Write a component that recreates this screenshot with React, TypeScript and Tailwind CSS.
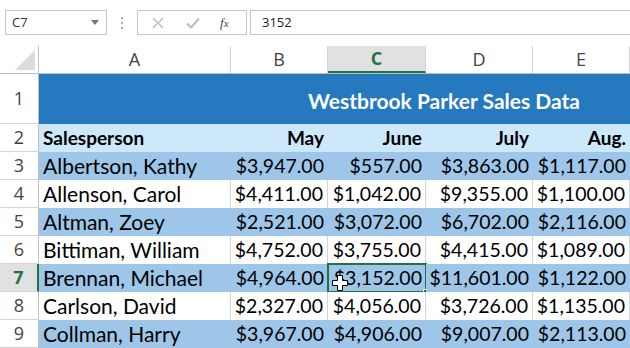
import React from "react";

const cols = [
  { key: "A", w: "w-[192px]" },
  { key: "B", w: "w-[97px]" },
  { key: "C", w: "w-[98px]" },
  { key: "D", w: "w-[107px]" },
  { key: "E", w: "w-[97px]" },
];

const rows: string[][] = [
  ["Albertson, Kathy", "$3,947.00", "$557.00", "$3,863.00", "$1,117.00"],
  ["Allenson, Carol", "$4,411.00", "$1,042.00", "$9,355.00", "$1,100.00"],
  ["Altman, Zoey", "$2,521.00", "$3,072.00", "$6,702.00", "$2,116.00"],
  ["Bittiman, William", "$4,752.00", "$3,755.00", "$4,415.00", "$1,089.00"],
  ["Brennan, Michael", "$4,964.00", "$3,152.00", "$11,601.00", "$1,122.00"],
  ["Carlson, David", "$2,327.00", "$4,056.00", "$3,726.00", "$1,135.00"],
  ["Collman, Harry", "$3,967.00", "$4,906.00", "$9,007.00", "$2,113.00"],
];

const cellFont = { fontFamily: "Lato, 'Open Sans', sans-serif" };

function RowHeader({ n, active }: { n: number; active?: boolean }) {
  return (
    <div
      className={`w-[39px] shrink-0 flex items-center justify-center border-b border-[#d4d4d4] text-[18px] ${
        active
          ? "bg-[#e1e1e1] text-[#217346] font-bold border-r-2 border-r-[#217346]"
          : "bg-white text-[#444] border-r border-r-[#bfbfbf]"
      }`}
      style={{ fontFamily: "'Open Sans', sans-serif" }}
    >
      {n}
    </div>
  );
}

function Cursor() {
  return (
    <svg
      className="absolute left-[4px] top-[11px]"
      width="16"
      height="16"
      viewBox="0 0 16 16"
    >
      <path
        d="M5.5 0.5h5v5h5v5h-5v5h-5v-5h-5v-5h5z"
        fill="#fff"
        stroke="#000"
        strokeWidth="1"
      />
    </svg>
  );
}

export default function App() {
  return (
    <div className="w-[630px] h-[348px] overflow-hidden bg-white select-none">
      {/* Formula bar */}
      <div className="h-[46px] flex items-start pt-[10px] pl-[5px]">
        <div
          className="w-[102px] h-[25px] border border-[#c6c6c6] flex items-center justify-between px-[6px] text-[13px] text-[#333]"
          style={{ fontFamily: "'Open Sans', sans-serif" }}
        >
          <span>C7</span>
          <svg width="8" height="5" viewBox="0 0 8 5" className="mr-[1px]">
            <path d="M0 0h8L4 5z" fill="#777" />
          </svg>
        </div>
        <div className="w-[30px] h-[25px] flex flex-col items-center justify-center gap-[3px]">
          <span className="w-[2px] h-[2px] bg-[#aaa]" />
          <span className="w-[2px] h-[2px] bg-[#aaa]" />
          <span className="w-[2px] h-[2px] bg-[#aaa]" />
        </div>
        <div className="w-[110px] h-[25px] border border-[#c6c6c6] flex items-center">
          <svg width="12" height="12" viewBox="0 0 12 12" className="ml-[14px]">
            <path d="M1 1l10 10M11 1L1 11" stroke="#bbb" strokeWidth="1.4" />
          </svg>
          <svg width="14" height="12" viewBox="0 0 14 12" className="ml-[22px]">
            <path d="M1 6.5l4 4L13 1.5" stroke="#bbb" strokeWidth="2" fill="none" />
          </svg>
          <span
            className="ml-[20px] text-[13px] italic text-[#444]"
            style={{ fontFamily: "'Liberation Serif', serif" }}
          >
            f<span className="text-[11px]">x</span>
          </span>
        </div>
        <div
          className="ml-[3px] flex-1 h-[25px] border-y border-l border-[#c6c6c6] flex items-center pl-[11px] text-[13px] text-[#222]"
          style={{ fontFamily: "'Open Sans', sans-serif" }}
        >
          3152
        </div>
      </div>

      {/* Column headers */}
      <div
        className="h-[28px] flex border-b border-[#bfbfbf]"
        style={{ fontFamily: "'Open Sans', sans-serif" }}
      >
        <div className="w-[39px] shrink-0 border-r border-[#bfbfbf] flex items-end justify-end pr-[3px] pb-[3px]">
          <svg width="20" height="20" viewBox="0 0 20 20">
            <path d="M20 0V20H0z" fill="#dcdcdc" />
          </svg>
        </div>
        {cols.map((c) => (
          <div
            key={c.key}
            className={`${c.w} shrink-0 flex items-center justify-center text-[18px] border-r border-[#d4d4d4] ${
              c.key === "C"
                ? "bg-[#e1e1e1] text-[#217346] font-bold border-b-2 border-b-[#217346]"
                : "text-[#444]"
            }`}
          >
            {c.key}
          </div>
        ))}
      </div>

      {/* Row 1 - title */}
      <div className="h-[50px] flex">
        <RowHeader n={1} />
        <div className="flex-1 bg-[#2579bf] flex items-center justify-end pr-[50px] pt-[3px]">
          <span className="text-white font-bold text-[21px]" style={cellFont}>
            Westbrook Parker Sales Data
          </span>
        </div>
      </div>

      {/* Row 2 - column titles */}
      <div className="h-[28px] flex" style={cellFont}>
        <RowHeader n={2} />
        {["Salesperson", "May", "June", "July", "Aug."].map((t, i) => (
          <div
            key={t}
            className={`${cols[i].w} shrink-0 bg-[#cce8fa] flex items-center font-bold text-[19px] text-black ${
              i === 0 ? "pl-[4px]" : "justify-end pr-[4px]"
            }`}
          >
            {t}
          </div>
        ))}
      </div>

      {/* Data rows */}
      {rows.map((r, ri) => {
        const n = ri + 3;
        const banded = ri % 2 === 0;
        return (
          <div key={n} className="h-[28px] flex" style={cellFont}>
            <RowHeader n={n} active={n === 7} />
            {r.map((v, ci) => {
              const selected = n === 7 && ci === 2;
              return (
                <div
                  key={ci}
                  className={`${cols[ci].w} shrink-0 relative flex items-center text-black whitespace-nowrap ${
                    banded ? "bg-[#9dc6e9]" : "bg-white border-r border-[#d4d4d4]"
                  } ${ci === 0 ? "pl-[4px] text-[21px]" : "justify-end pr-[4px] text-[19.5px]"}`}
                >
                  {v}
                  {selected && (
                    <>
                      <div className="absolute inset-[-1px] border-2 border-[#217346]" />
                      <div className="absolute right-[-4px] bottom-[-4px] w-[7px] h-[7px] bg-[#217346] border border-white" />
                      <Cursor />
                    </>
                  )}
                </div>
              );
            })}
          </div>
        );
      })}
    </div>
  );
}
